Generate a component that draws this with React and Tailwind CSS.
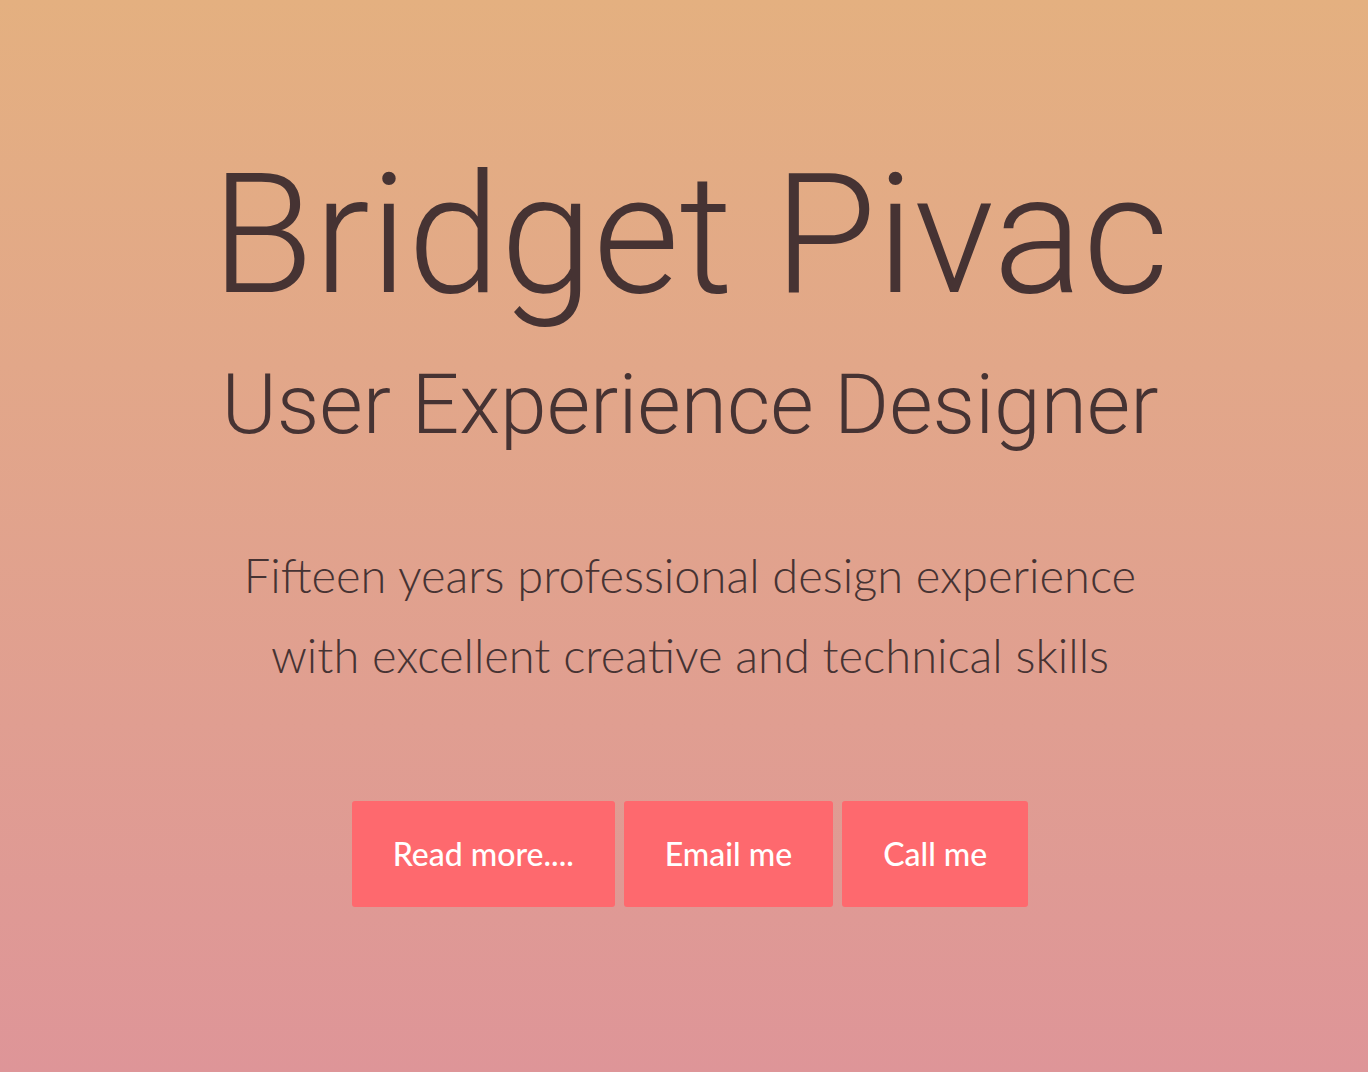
export default function App() {
  const buttons = ['Read more....', 'Email me', 'Call me']

  return (
    <div className="min-h-[1072px] w-full pl-[12px] bg-gradient-to-b from-[#e4b080] to-[#de9598] flex flex-col items-center text-[#463333]">
      <h1 className="mt-[140px] text-[167px] leading-[190px] font-light font-['Roboto',sans-serif]">
        Bridget Pivac
      </h1>
      <h2 className="mt-[20px] text-[84px] leading-[110px] font-light font-['Roboto',sans-serif]">
        User Experience Designer
      </h2>
      <p className="mt-[75px] text-[47px] leading-[80px] font-light text-center font-['Lato',sans-serif]">
        Fifteen years professional design experience
        <br />
        with excellent creative and technical skills
      </p>
      <div className="mt-[106px] flex gap-[9px]">
        {buttons.map(label => (
          <button
            key={label}
            className="h-[106px] px-[41px] rounded-[3px] bg-[#fe696e] text-white text-[32px] font-medium font-['Lato',sans-serif]"
          >
            {label}
          </button>
        ))}
      </div>
    </div>
  )
}
